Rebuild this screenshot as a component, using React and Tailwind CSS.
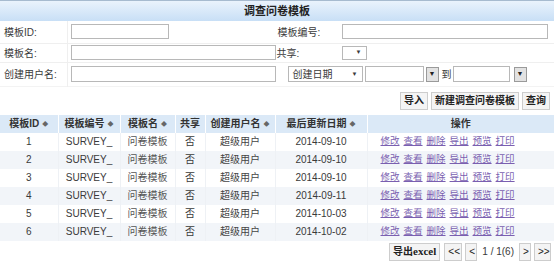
import React from "react";

const rows = [
  { id: 1, date: "2014-09-10" },
  { id: 2, date: "2014-09-10" },
  { id: 3, date: "2014-09-10" },
  { id: 4, date: "2014-09-11" },
  { id: 5, date: "2014-10-03" },
  { id: 6, date: "2014-10-02" },
];

const actions = ["修改", "查看", "删除", "导出", "预览", "打印"];

const Sort = () => <span className="ml-[3px] text-[6px] align-middle text-[#666]">◆</span>;

const Input = ({ className = "" }) => (
  <div className={`h-[15px] bg-white border border-[#b8b8b8] ${className}`} />
);

const DropBtn = () => (
  <div className="w-[13px] h-[15px] border border-[#9a9a9a] bg-[#e2e2e2] flex items-center justify-center text-[7px] text-[#222]">
    ▼
  </div>
);

const Btn = ({ children, className = "" }) => (
  <button className={`h-[18px] px-[3px] border border-[#cdcdcd] bg-[#f4f4f4] text-[10px] font-bold text-[#222] leading-none ${className}`}>
    {children}
  </button>
);

export default function App() {
  return (
    <div
      className="w-[554px] h-[263px] bg-white text-[#3a3a3a] text-[10px] overflow-hidden"
      style={{ fontFamily: '"Liberation Sans", "Noto Sans CJK SC", sans-serif' }}
    >
      {/* title bar */}
      <div className="h-[21px] border-t border-[#a7bbcf] bg-gradient-to-b from-[#eaf3fc] to-[#c8dff6] flex items-center justify-center font-bold text-[11px] text-[#222]">
        调查问卷模板
      </div>

      {/* search form */}
      <table className="w-full border-collapse">
        <tbody>
          <tr className="h-[22px] border-b border-[#efefef]">
            <td className="w-[67px] pl-[4px] pt-[2px] border-r border-[#efefef]">模板ID:</td>
            <td className="pl-[3px] w-[208px]">
              <Input className="w-[98px]" />
            </td>
            <td className="pl-[2px] pt-[2px] w-[66px]">模板编号:</td>
            <td className="pr-[4px]">
              <Input className="w-[206px]" />
            </td>
          </tr>
          <tr className="h-[19px] border-b border-[#efefef]">
            <td className="pl-[4px] pt-[1px] border-r border-[#efefef]">模板名:</td>
            <td className="pl-[3px]">
              <Input className="w-[205px]" />
            </td>
            <td className="pl-[1px] pt-[1px]">共享:</td>
            <td>
              <div className="w-[25px] h-[14px] border border-[#b8b8b8] bg-white flex items-center justify-end pr-[4px] text-[6px]">▼</div>
            </td>
          </tr>
          <tr className="h-[24px] border-b border-[#f3f3f3]">
            <td className="pl-[4px] pt-[1px] border-r border-[#efefef]">创建用户名:</td>
            <td className="pl-[3px]">
              <Input className="w-[205px] h-[16px]" />
            </td>
            <td colSpan={2}>
              <div className="flex items-center pl-[12px]">
                <div className="w-[75px] h-[16px] border border-[#b8b8b8] bg-white flex items-center justify-between px-[4px]">
                  <span>创建日期</span>
                  <span className="text-[6px]">▼</span>
                </div>
                <Input className="w-[59px] h-[16px] ml-[2px]" />
                <div className="ml-[2px]"><DropBtn /></div>
                <span className="ml-[3px] text-[10px]">到</span>
                <Input className="w-[57px] h-[16px] ml-[1px]" />
                <div className="ml-[4px]"><DropBtn /></div>
              </div>
            </td>
          </tr>
        </tbody>
      </table>

      {/* action buttons */}
      <div className="flex justify-end gap-[3px] pr-[4px] mt-[5px]">
        <Btn>导入</Btn>
        <Btn>新建调查问卷模板</Btn>
        <Btn>查询</Btn>
      </div>

      {/* data table */}
      <table className="w-full border-collapse mt-[5px] table-fixed">
        <colgroup>
          <col className="w-[58px]" />
          <col className="w-[62px]" />
          <col className="w-[55px]" />
          <col className="w-[30px]" />
          <col className="w-[70px]" />
          <col className="w-[92px]" />
          <col />
        </colgroup>
        <thead>
          <tr className="h-[18px] bg-[#dbe9f7] font-bold text-[#333]">
            <th className="border-r border-white">模板ID<Sort /></th>
            <th className="border-r border-white">模板编号<Sort /></th>
            <th className="border-r border-white">模板名<Sort /></th>
            <th className="border-r border-white">共享</th>
            <th className="border-r border-white">创建用户名<Sort /></th>
            <th className="border-r border-white">最后更新日期<Sort /></th>
            <th>操作</th>
          </tr>
        </thead>
        <tbody>
          {rows.map((r, i) => (
            <tr key={r.id} className={`h-[18px] text-center ${i % 2 ? "bg-[#f2f5f9]" : "bg-white"}`}>
              <td className="border-r border-[#eef1f5]">{r.id}</td>
              <td className="border-r border-[#eef1f5]">SURVEY_</td>
              <td className="border-r border-[#eef1f5] text-[#555]">问卷模板</td>
              <td className="border-r border-[#eef1f5]">否</td>
              <td className="border-r border-[#eef1f5] text-[#444]">超级用户</td>
              <td className="border-r border-[#eef1f5]">{r.date}</td>
              <td>
                <div className="flex justify-start pl-[13px] gap-[4px] text-[9.5px]">
                  {actions.map((a) => (
                    <a key={a} href="#" className="text-[#7a5fb0] underline">
                      {a}
                    </a>
                  ))}
                </div>
              </td>
            </tr>
          ))}
        </tbody>
      </table>

      {/* pagination */}
      <div className="flex justify-end items-center gap-[3px] pr-[3px] mt-[2px]">
        <Btn className="px-[3px] mr-[1px]">
          导出<span className="text-[11px]" style={{ fontFamily: '"Liberation Serif", serif' }}>excel</span>
        </Btn>
        <Btn className="font-normal w-[18px] px-0">&lt;&lt;</Btn>
        <Btn className="font-normal w-[12px] px-0">&lt;</Btn>
        <span className="text-[10px] px-[2px]">1 / 1(6)</span>
        <Btn className="font-normal w-[12px] px-0">&gt;</Btn>
        <Btn className="font-normal w-[17px] px-0">&gt;&gt;</Btn>
      </div>
    </div>
  );
}
